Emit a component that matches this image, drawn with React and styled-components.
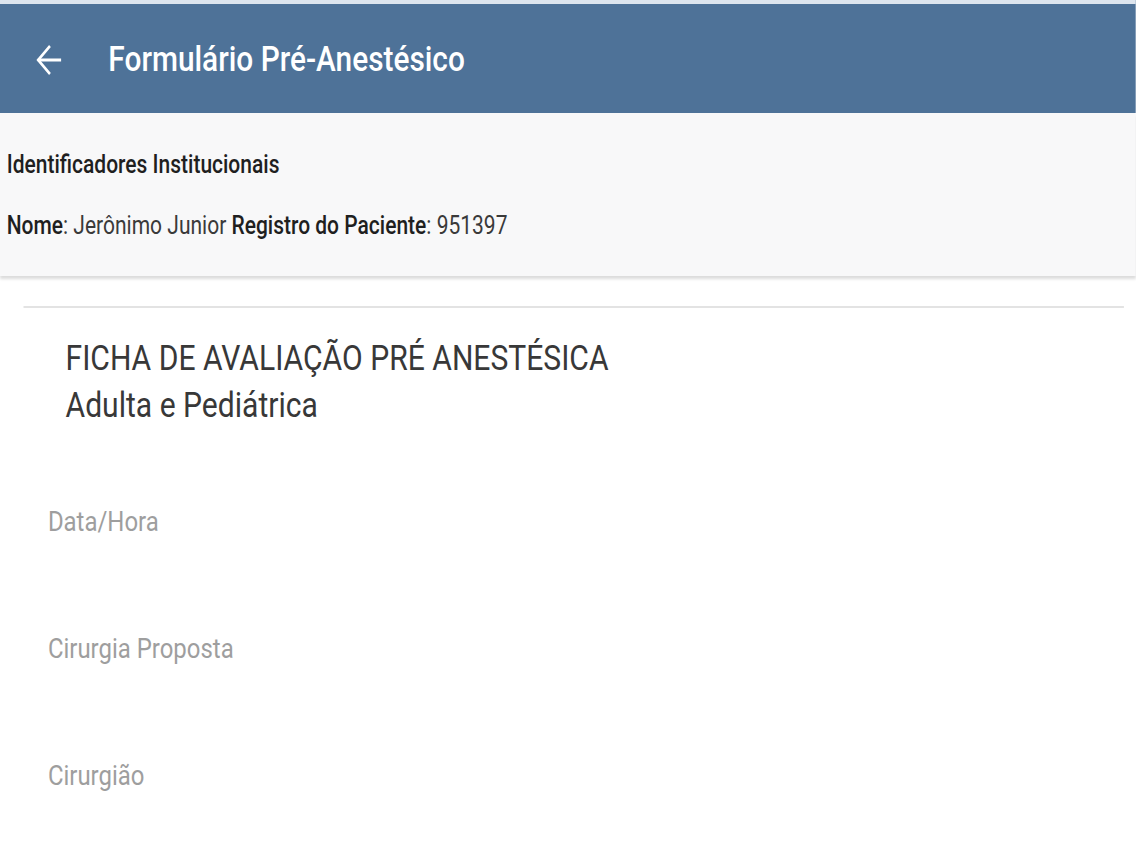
import React from 'react';
import styled, { createGlobalStyle } from 'styled-components';

// the reference is a phone capture squeezed sideways, so the page is laid
// out at its natural width and narrowed as a whole
const SQUEEZE = 0.84;
const PAGE_WIDTH = Math.round(1136 / SQUEEZE);

const GlobalStyle = createGlobalStyle`
  html, body {
    margin: 0;
    padding: 0;
    background: #ffffff;
    overflow: hidden;
  }
  body {
    font-family: Roboto, "Noto Sans", Arial, sans-serif;
  }
`;

const Page = styled.div`
  width: ${PAGE_WIDTH}px;
  min-height: 852px;
  transform: scaleX(${SQUEEZE});
  transform-origin: 0 0;
  background: #ffffff;
`;

const AppBar = styled.header`
  display: flex;
  align-items: center;
  box-sizing: border-box;
  height: 113px;
  padding: 3px 0 0 42px;
  border-top: 4px solid #dde5ee;
  background: #4e7298;
  color: #ffffff;
`;

const BackButton = styled.button`
  display: flex;
  align-items: center;
  justify-content: center;
  padding: 0;
  border: 0;
  background: none;
  color: inherit;
  cursor: pointer;
`;

const Title = styled.h1`
  margin: 0 0 0 56px;
  font-size: 35.5px;
  font-weight: 500;
  line-height: 1.17;
`;

const InfoPanel = styled.section`
  display: flex;
  flex-direction: column;
  gap: 31px;
  padding: 37px 8px 35px;
  background: #f8f8f9;
  box-shadow: 0 3px 3px rgba(0, 0, 0, 0.14);
  position: relative;
`;

const InfoLine = styled.div`
  font-size: 25px;
  line-height: 30px;
  color: #3a3a3a;
`;

const InfoHeading = styled(InfoLine)`
  font-weight: 500;
  color: #1f1f1f;
`;

const Key = styled.strong`
  font-weight: 500;
  color: #1f1f1f;
`;

const Content = styled.main`
  padding: 30px 14px 0 28px;
`;

const Divider = styled.hr`
  margin: 0;
  border: 0;
  height: 2px;
  background: #e3e3e3;
`;

const FormHeading = styled.h2`
  margin: 27px 0 0 50px;
  font-size: 35.8px;
  font-weight: 400;
  line-height: 46.7px;
  color: #383838;
`;

const Fields = styled.div`
  display: flex;
  flex-direction: column;
  margin-top: 77px;
`;

const Field = styled.label`
  display: block;
  height: 127px;
  margin-left: 29px;
  font-size: 28.5px;
  line-height: 34px;
  color: #9e9e9e;
`;

function ArrowBack() {
  return (
    <svg width="31" height="32" viewBox="0 0 31 32" fill="none" stroke="currentColor" strokeWidth="3">
      <path d="M31 16H3" />
      <path d="M17.5 2L3.5 16l14 14" />
    </svg>
  );
}

const fields = ['Data/Hora', 'Cirurgia Proposta', 'Cirurgião'];

export default function App() {
  return (
    <Page>
      <GlobalStyle />
      <AppBar>
        <BackButton aria-label="Voltar">
          <ArrowBack />
        </BackButton>
        <Title>Formulário Pré-Anestésico</Title>
      </AppBar>

      <InfoPanel>
        <InfoHeading>Identificadores Institucionais</InfoHeading>
        <InfoLine>
          <Key>Nome</Key>: Jerônimo Junior <Key>Registro do Paciente</Key>: 951397
        </InfoLine>
      </InfoPanel>

      <Content>
        <Divider />
        <FormHeading>
          FICHA DE AVALIAÇÃO PRÉ ANESTÉSICA
          <br />
          Adulta e Pediátrica
        </FormHeading>
        <Fields>
          {fields.map((f) => (
            <Field key={f}>{f}</Field>
          ))}
        </Fields>
      </Content>
    </Page>
  );
}
